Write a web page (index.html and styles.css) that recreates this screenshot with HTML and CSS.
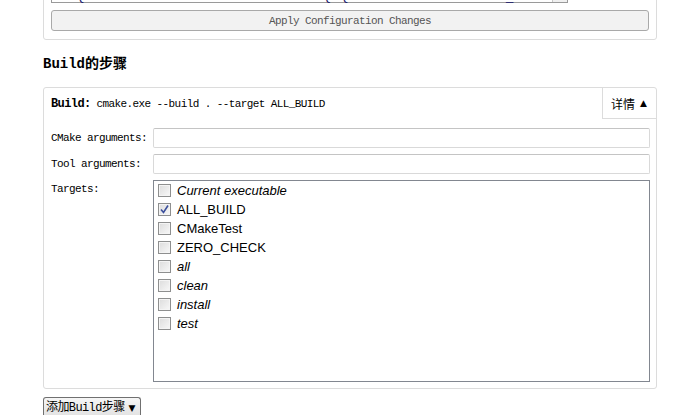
FILE: index.html
```html
<!DOCTYPE html>
<html>

<head>
  <meta charset="UTF-8">
  <title>Build Settings</title>
  <link rel="stylesheet" href="styles.css">
</head>

<body>
  <div class="page">
    <div class="panel panel-config">
      <div class="cache-table">
        <div class="cache-row">
          <span class="cache-key">Qt5 Dir</span>
          <span class="cache-value">D:/Qt/Qt5.12.10/5.12.10/msvc2019_64/lib</span>
          <span class="cache-scroll"></span>
        </div>
      </div>
      <button class="apply-btn">Apply Configuration Changes</button>
    </div>

    <h3 class="step-title">Build的步骤</h3>

    <div class="panel panel-step">
      <div class="step-head">
        <div class="step-summary"><b>Build:</b> cmake.exe --build . --target ALL_BUILD</div>
        <div class="details-toggle">详情 <span class="arrow">▲</span></div>
      </div>
      <div class="step-form">
        <label class="form-label">CMake arguments:</label>
        <input class="form-input" type="text">
        <label class="form-label">Tool arguments:</label>
        <input class="form-input" type="text">
        <label class="form-label form-label_top">Targets:</label>
        <div class="target-list">
          <div class="target-item target-item_special"><span class="check"></span>Current executable</div>
          <div class="target-item"><span class="check check_on"><svg width="11" height="11" viewBox="0 0 11 11"><path d="M2 5.5 L4.5 8.5 L9 1.5" fill="none" stroke="#3b4f9c" stroke-width="1.6"/></svg></span>ALL_BUILD</div>
          <div class="target-item"><span class="check"></span>CMakeTest</div>
          <div class="target-item"><span class="check"></span>ZERO_CHECK</div>
          <div class="target-item target-item_special"><span class="check"></span>all</div>
          <div class="target-item target-item_special"><span class="check"></span>clean</div>
          <div class="target-item target-item_special"><span class="check"></span>install</div>
          <div class="target-item target-item_special"><span class="check"></span>test</div>
        </div>
      </div>
    </div>

    <button class="add-step-btn">添加Build步骤<span class="add-arrow">▼</span></button>
  </div>
</body>

</html>
```

FILE: styles.css
```css
body {
  margin: 0;
  background-color: #fff;
  color: #000;
  font-family: "Liberation Mono", "Noto Sans CJK SC", monospace;
  overflow: hidden;
}

.page {
  width: 614px;
  margin-left: 43px;
}

.panel {
  border: 1px solid #dcdcdc;
  border-radius: 3px;
  background-color: #fff;
}

/* 上面的配置面板，顶部已滚出视口 */
.panel-config {
  margin-top: -25px;
  padding: 0 7px 8px 7px;
}

.cache-table {
  width: 515px;
  height: 26px;
  border: 1px solid #9a9a9a;
  border-top: none;
}

.cache-row {
  display: flex;
  align-items: flex-end;
  height: 26px;
  font-family: "Liberation Sans", sans-serif;
  font-size: 13px;
  line-height: 12px;
  color: #1a1a6a;
}

.cache-key {
  width: 230px;
  padding-left: 23px;
}

.cache-value {
  flex: 1;
}

.cache-scroll {
  width: 14px;
  height: 26px;
  border-left: 1px solid #c8c8c8;
  background-color: #f0f0f0;
}

.apply-btn {
  display: block;
  width: 598px;
  height: 21px;
  margin-top: 7px;
  padding: 0;
  border: 1px solid #a9a9a9;
  border-radius: 3px;
  background-color: #f2f2f2;
  color: #555;
  font-family: "Liberation Mono", monospace;
  font-size: 11px;
  letter-spacing: -0.6px;
}

.step-title {
  margin: 14px 0 13px 0;
  font-family: "Liberation Mono", "Noto Sans CJK SC", monospace;
  font-size: 14px;
  line-height: 20px;
  font-weight: bold;
}

.step-head {
  display: flex;
  justify-content: space-between;
  height: 31px;
}

.step-summary {
  align-self: center;
  padding-left: 7px;
  font-size: 11px;
  letter-spacing: -0.6px;
}

.step-summary b {
  font-size: 12px;
}

.details-toggle {
  display: flex;
  align-items: center;
  width: 45px;
  padding-left: 8px;
  border-left: 1px solid #dcdcdc;
  border-bottom: 1px solid #dcdcdc;
  font-family: "Noto Sans CJK SC", sans-serif;
  font-size: 12px;
}

.details-toggle .arrow {
  margin-left: 5px;
  font-family: "DejaVu Sans", sans-serif;
  font-size: 9px;
}

.step-form {
  display: grid;
  grid-template-columns: 102px 1fr;
  row-gap: 6px;
  padding: 9px 6px 6px 7px;
}

.form-label {
  align-self: center;
  font-size: 11px;
  letter-spacing: -0.6px;
}

.form-label_top {
  align-self: start;
  padding-top: 3px;
}

.form-input {
  box-sizing: border-box;
  height: 20px;
  margin: 0;
  border: 1px solid #d9d9d9;
  border-top-color: #c4c4c4;
  border-radius: 2px;
}

.target-list {
  box-sizing: border-box;
  height: 202px;
  padding: 0 4px;
  border: 1px solid #828790;
  font-family: "Liberation Sans", sans-serif;
  font-size: 13px;
}

.target-item {
  display: flex;
  align-items: center;
  height: 19px;
}

.target-item_special {
  font-style: italic;
}

.check {
  box-sizing: border-box;
  display: flex;
  align-items: center;
  justify-content: center;
  width: 13px;
  height: 13px;
  margin-right: 6px;
  border: 1px solid #8e8f8f;
  background: linear-gradient(135deg, #dcdcdc, #f8f8f8);
  box-shadow: inset 0 0 0 1px #f4f4f4;
}

.add-step-btn {
  display: block;
  height: 19px;
  margin-top: 8px;
  padding: 2px 5px 0 2px;
  border: 1px solid #707070;
  border-bottom: none;
  border-radius: 3px 3px 0 0;
  background: linear-gradient(#f6f6f6, #e2e2e2);
  color: #000;
  font-family: "Liberation Mono", "Noto Sans CJK SC", monospace;
  font-size: 12px;
  line-height: 15px;
  letter-spacing: -0.6px;
}

.add-arrow {
  margin-left: 4px;
  font-family: "DejaVu Sans", sans-serif;
  font-size: 9px;
}
```
